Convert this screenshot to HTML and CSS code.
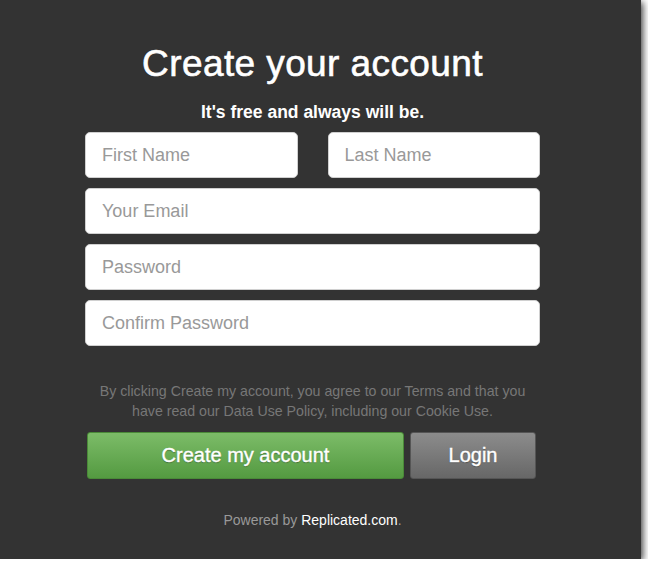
FILE: index.html
```html
<!DOCTYPE html>
<html>
<head>
<meta charset="utf-8">
<link rel="stylesheet" href="styles.css">
</head>
<body>
<div class="panel">
  <div class="form">
    <h1 class="title">Create your account</h1>
    <p class="subtitle">It's free and always will be.</p>
    <div class="row">
      <input class="field" type="text" placeholder="First Name">
      <input class="field" type="text" placeholder="Last Name">
    </div>
    <input class="field" type="text" placeholder="Your Email">
    <input class="field" type="password" placeholder="Password">
    <input class="field" type="password" placeholder="Confirm Password">
    <p class="legal">By clicking Create my account, you agree to our Terms and that you have read our Data Use Policy, including our Cookie Use.</p>
    <div class="actions">
      <button class="btn btn-create">Create my account</button>
      <button class="btn btn-login">Login</button>
    </div>
    <p class="powered">Powered by <span class="brand">Replicated.com</span>.</p>
  </div>
</div>
</body>
</html>
```
FILE: styles.css
```css
html, body {
  margin: 0;
  padding: 0;
  background: #fff;
}
body {
  font-family: "Liberation Sans", Arial, sans-serif;
}
.panel {
  width: 641px;
  height: 559px;
  background: #333;
  box-shadow: 2px 2px 7px rgba(0, 0, 0, 0.75);
  overflow: hidden;
}
.form {
  width: 455px;
  margin-left: 85px;
  display: flex;
  flex-direction: column;
  gap: 10px;
}
.title {
  margin: 43px 0 0;
  font-size: 37px;
  font-weight: normal;
  line-height: 42px;
  color: #fff;
  text-align: center;
  letter-spacing: 0.4px;
  -webkit-text-stroke: 0.6px #fff;
}
.subtitle {
  margin: 7px 0 0;
  font-size: 17.5px;
  font-weight: bold;
  line-height: 20px;
  color: #fff;
  text-align: center;
}
.row {
  display: flex;
  gap: 30px;
}
.row .field {
  flex: 1;
  min-width: 0;
}
.field {
  box-sizing: border-box;
  height: 46px;
  margin: 0;
  padding: 0 16px;
  border: 1px solid #d0d0d0;
  border-radius: 5px;
  background: #fff;
  font-family: "Liberation Sans", Arial, sans-serif;
  font-size: 18px;
  color: #333;
  outline: none;
}
.field::placeholder {
  color: #999;
}
.legal {
  margin: 25px 10px 0;
  font-size: 14.2px;
  line-height: 20px;
  color: #777;
  text-align: center;
}
.actions {
  display: flex;
  gap: 6px;
  margin: 1px 4px 0 2px;
}
.btn {
  box-sizing: border-box;
  height: 47px;
  border-radius: 3px;
  font-family: "Liberation Sans", Arial, sans-serif;
  font-size: 20px;
  color: #fff;
  text-shadow: 0 1px 1px rgba(0, 0, 0, 0.35);
  -webkit-text-stroke: 0.4px #fff;
  cursor: pointer;
}
.btn-create {
  width: 317px;
  border: 1px solid #4a8a38;
  background: linear-gradient(#7cbc68, #549a41);
}
.btn-login {
  flex: 1;
  border: 1px solid #555;
  background: linear-gradient(#8c8c8c, #676767);
}
.powered {
  margin: 21px 0 0;
  font-size: 14px;
  line-height: 20px;
  color: #999;
  text-align: center;
}
.brand {
  color: #fff;
}
```
